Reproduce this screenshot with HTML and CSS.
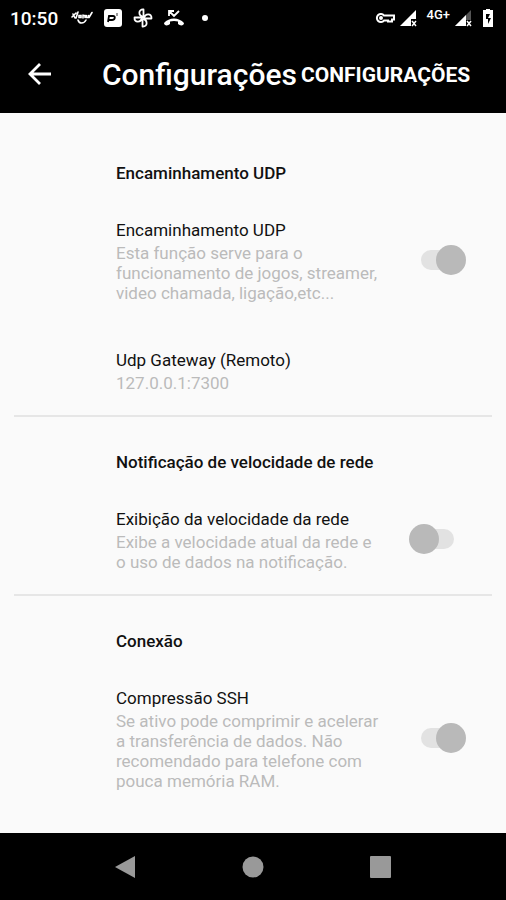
FILE: index.html
```html
<!DOCTYPE html>
<html lang="pt-BR">
<head>
  <meta charset="UTF-8">
  <meta name="viewport" content="width=device-width, initial-scale=1.0">
  <title>Configurações</title>
  <link rel="stylesheet" href="styles.css">
</head>

<body>

<!-- Barra de status -->
<div class="status-bar">
  <span class="clock">10:50</span>
  <div class="status-left">
    <svg width="22" height="16" viewBox="0 0 22 16" fill="none" stroke="#fff" stroke-width="1.600" stroke-linecap="round">
      <path d="M2 4l2 4M5 3L1 7M7 2L5 8M8 5.500v2h2v-2zM12 5v3M12 5.500h2v2M15.500 5.500v2h2v-2M21 2.500l-3 5"/>
      <path d="M7 10c1 4 6 4 8 0"/>
    </svg>
    <svg width="20" height="20" viewBox="0 0 20 20">
      <rect x="1" y="1" width="18" height="18" rx="3" fill="#fff"/>
      <path d="M5 14L6 8h4c3 0 2 4-1 4H6" fill="none" stroke="#000" stroke-width="1.800"/>
      <path d="M14 5v3" stroke="#777" stroke-width="1.500"/>
    </svg>
    <svg width="20" height="20" viewBox="0 0 20 20" fill="none" stroke="#fff" stroke-width="1.800" stroke-linejoin="round">
      <path d="M10.500 9V1.500C5 1 5 8 10.500 8.500zM11 10.500h7.500c.5-5.500-6.500-5.500-7.500 0zM9.500 11v7.500c5.500.5 5.500-7 0-7.500zM9 9.500H1.500c-.5 5.500 6.500 5.500 7.500 0z"/>
    </svg>
    <svg width="22" height="18" viewBox="0 0 22 18">
      <path d="M1 14c5-6 15-6 20 0 0 3-4 3-6 1v-2.500c-2-.7-6-.7-8 0V15c-2 2-6 2-6-1z" fill="#fff"/>
      <path d="M6 7V2h5M6 2l5 5 5-5" fill="none" stroke="#fff" stroke-width="1.800"/>
    </svg>
    <span class="dot"></span>
  </div>
  <div class="status-right">
    <svg width="20" height="12" viewBox="0 0 20 12" fill="none" stroke="#fff" stroke-width="2">
      <path d="M9 3.500a4 4 0 1 0 0 5h4v1h4v-2h2v-4z"/>
      <circle cx="6" cy="6" r="1"/>
    </svg>
    <svg width="18" height="18" viewBox="0 0 18 18">
      <path d="M17 1v9h-5v7H1z" fill="#fff"/>
      <path d="M13 12l4 5M17 12l-4 5" stroke="#fff" stroke-width="1.500"/>
    </svg>
    <span class="network">4G+</span>
    <svg width="18" height="18" viewBox="0 0 18 18">
      <path d="M17 1v16H1z" fill="#555"/>
      <path d="M12 6v11H1z" fill="#fff"/>
      <path d="M12 11h6v6h-6z" fill="#000"/>
      <path d="M13 12l4 5M17 12l-4 5" stroke="#fff" stroke-width="1.500"/>
    </svg>
    <svg class="battery" width="12" height="20" viewBox="0 0 12 20">
      <path d="M4 1h4v1h3v17H1V2h3z" fill="#fff"/>
      <path d="M8 6H4v5h2v5l3-6H6z" fill="#000"/>
    </svg>
  </div>
</div>

<!-- Cabeçalho -->
<header class="toolbar">
  <button class="back" type="button" aria-label="Voltar">
    <svg width="24" height="24" viewBox="0 0 24 24" fill="none" stroke="#fff" stroke-width="2.800">
      <path d="M23 11H3M12 1L2 11l10 10"/>
    </svg>
  </button>
  <h1>Configurações</h1>
  <span class="subtitle">CONFIGURAÇÕES</span>
</header>

<!-- Lista de preferências -->
<main>
  <section>
    <h2>Encaminhamento UDP</h2>
    <div class="item">
      <div class="text">
        <label for="udp">Encaminhamento UDP</label>
        <p>Esta função serve para o funcionamento de jogos, streamer, video chamada, ligação,etc...</p>
      </div>
      <input type="checkbox" class="switch" id="udp" checked>
    </div>
    <div class="item">
      <div class="text">
        <h3>Udp Gateway (Remoto)</h3>
        <p>127.0.0.1:7300</p>
      </div>
    </div>
  </section>

  <section>
    <h2>Notificação de velocidade de rede</h2>
    <div class="item">
      <div class="text">
        <label for="speed">Exibição da velocidade da rede</label>
        <p>Exibe a velocidade atual da rede e o uso de dados na notificação.</p>
      </div>
      <input type="checkbox" class="switch" id="speed">
    </div>
  </section>

  <section>
    <h2>Conexão</h2>
    <div class="item">
      <div class="text">
        <label for="ssh">Compressão SSH</label>
        <p>Se ativo pode comprimir e acelerar a transferência de dados. Não recomendado para telefone com pouca memória RAM.</p>
      </div>
      <input type="checkbox" class="switch" id="ssh" checked>
    </div>
  </section>
</main>

<!-- Botões de navegação -->
<nav class="nav-bar">
  <button type="button" aria-label="Voltar">
    <svg width="24" height="24" viewBox="0 0 24 24"><path d="M22 1v22L2 12z" fill="#999"/></svg>
  </button>
  <button type="button" aria-label="Início">
    <svg width="24" height="24" viewBox="0 0 24 24"><circle cx="12" cy="12" r="10.500" fill="#999"/></svg>
  </button>
  <button type="button" aria-label="Recentes">
    <svg width="24" height="24" viewBox="0 0 24 24"><rect x="1" y="1" width="21" height="22" rx="1" fill="#999"/></svg>
  </button>
</nav>

</body>
</html>
```
FILE: styles.css
```css
* {
  box-sizing: border-box;
}

body {
  margin: 0;
  min-height: 100vh;
  display: flex;
  flex-direction: column;
  font-family: Roboto, sans-serif;
  background-color: #fafafa;
  color: #111;
}

h1, h2, h3, p {
  margin: 0;
}

button {
  display: flex;
  align-items: center;
  justify-content: center;
  padding: 0;
  border: none;
  background: none;
}

svg {
  flex: none;
}

/* Barra de status */
.status-bar {
  display: flex;
  align-items: center;
  height: 36px;
  padding: 0 12px 0 10px;
  background-color: #000;
  color: #fff;
}

.clock {
  font-size: 19px;
  font-weight: 500;
}

.status-left {
  display: flex;
  align-items: center;
  gap: 10px;
  margin-left: 13px;
}

.dot {
  width: 6px;
  height: 6px;
  margin-left: 7px;
  border-radius: 50%;
  background-color: #fff;
}

.status-right {
  display: flex;
  align-items: center;
  gap: 4px;
  margin-left: auto;
}

.network {
  align-self: flex-start;
  margin-left: 6px;
  font-size: 13px;
  line-height: 14px;
  font-weight: 500;
}

.battery {
  margin-left: 6px;
}

/* Cabeçalho */
.toolbar {
  display: flex;
  align-items: center;
  height: 77px;
  padding: 0 28px;
  background-color: #000;
  color: #fff;
}

h1 {
  margin-left: 50px;
  font-size: 30px;
  font-weight: 500;
}

.subtitle {
  margin-left: 4px;
  font-size: 21px;
  font-weight: 700;
}

/* Preferências */
main {
  flex: 1;
  padding: 15px 14px 20px;
}

section {
  padding: 32px 26px 0 102px;
}

section + section {
  border-top: 2px solid #e6e6e6;
}

h2 {
  margin-bottom: 9px;
  font-size: 17px;
  line-height: 26px;
  font-weight: 500;
}

.item {
  display: flex;
  align-items: center;
  gap: 26px;
  padding: 22px 0;
}

.text {
  flex: 1;
}

h3, label {
  display: block;
  font-size: 17px;
  line-height: 26px;
  font-weight: 400;
}

p {
  font-size: 17px;
  line-height: 20px;
  color: #bbb;
}

.switch {
  appearance: none;
  display: flex;
  align-items: center;
  position: relative;
  flex: none;
  width: 57px;
  height: 30px;
  margin: 0;
  padding: 0 12px;
}

.switch::before {
  content: "";
  flex: 1;
  height: 20px;
  border-radius: 10px;
  background-color: #e2e2e2;
}

.switch::after {
  content: "";
  position: absolute;
  left: 0;
  width: 30px;
  height: 30px;
  border-radius: 50%;
  background-color: #b9b9b9;
}

.switch:checked::after {
  left: 27px;
}

/* Navegação */
.nav-bar {
  display: grid;
  grid-template-columns: repeat(3, 1fr);
  height: 67px;
  padding: 0 12%;
  background-color: #000;
}
```
